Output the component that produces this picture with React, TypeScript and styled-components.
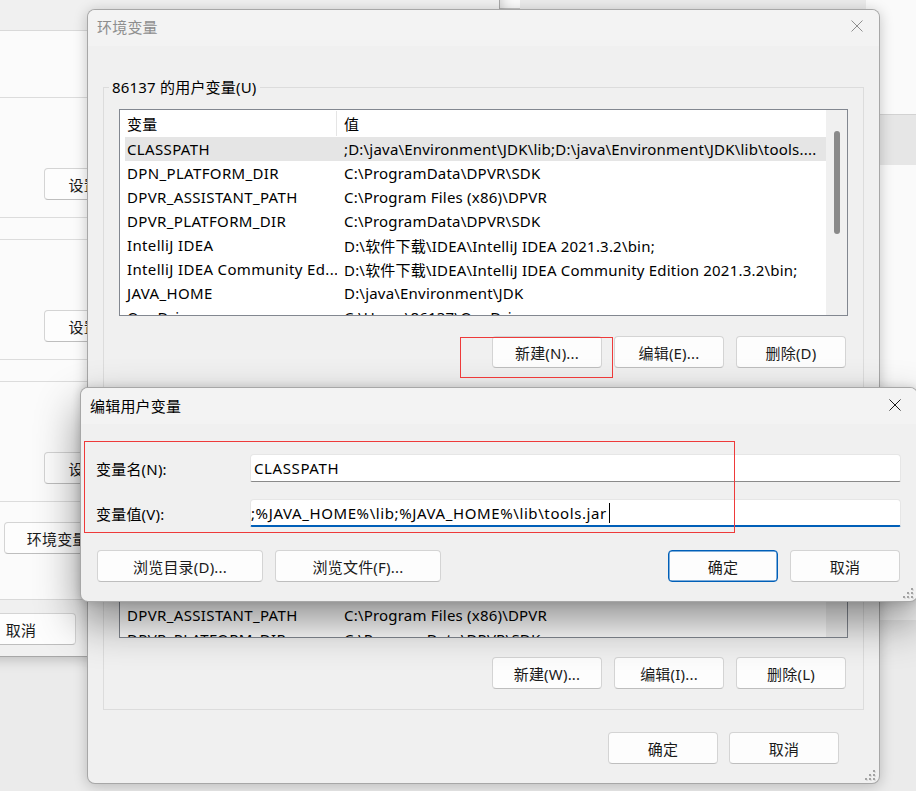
import React from 'react';
import styled, { createGlobalStyle, css } from 'styled-components';

const GlobalStyles = createGlobalStyle`
  html, body {
    margin: 0;
    padding: 0;
  }
  body {
    font-family: "Noto Sans", "Noto Sans CJK SC", sans-serif;
    font-size: 15px;
    letter-spacing: 0.2px;
    color: #000;
  }
  * {
    box-sizing: border-box;
  }
`

const Desktop = styled.div`
  position: relative;
  width: 916px;
  height: 791px;
  overflow: hidden;
  background: #ebebeb;
`

type Frame = { $left: number; $top: number; $width: number; $height: number };

const Window = styled.div<Frame & { $active?: boolean }>`
  position: absolute;
  left: ${({$left}) => $left}px;
  top: ${({$top}) => $top}px;
  width: ${({$width}) => $width}px;
  height: ${({$height}) => $height}px;
  display: flex;
  flex-direction: column;
  background: #f0f0f0;
  border: 1px solid rgba(0, 0, 0, 0.3);
  border-radius: 8px;
  overflow: hidden;
  box-shadow: ${({$active}) => $active
    ? '0 20px 44px rgba(0, 0, 0, 0.44), 0 0 10px rgba(0, 0, 0, 0.14)'
    : '0 2px 14px rgba(0, 0, 0, 0.22)'};
`

const TitleBar = styled.div<{ $inactive?: boolean }>`
  height: 36px;
  flex-shrink: 0;
  display: flex;
  align-items: center;
  padding-left: 9px;
  padding-bottom: ${({$inactive}) => $inactive ? 4 : 2}px;
  background: #f3f3f3;
  color: ${({$inactive}) => $inactive ? '#8e8e8e' : '#000'};
  font-size: 15px;
`

const CloseBox = styled.div`
  margin-left: auto;
  width: 44px;
  height: 36px;
  display: flex;
  align-items: center;
  justify-content: center;
`

const CloseIcon = ({color}: { color: string }) => (
  <svg width="12" height="12" viewBox="0 0 12 12">
    <path d="M0.5 0.5 L11.5 11.5 M11.5 0.5 L0.5 11.5" stroke={color} strokeWidth="1" fill="none"/>
  </svg>
)

const GripBox = styled.svg`
  position: absolute;
  right: 2px;
  bottom: 1px;
`

const Grip = () => (
  <GripBox width="12" height="12" viewBox="0 0 12 12">
    {[[8, 0], [4, 4], [8, 4], [0, 8], [4, 8], [8, 8]].map(([x, y]) => (
      <g key={`${x}-${y}`}>
        <rect x={x + 1} y={y + 1} width="2" height="2" fill="#dcdcdc"/>
        <rect x={x} y={y} width="2" height="2" fill="#a3a3a3"/>
      </g>
    ))}
  </GripBox>
)

/* ---------- buttons ---------- */

const Button = styled.button<{ $width: number; $default?: boolean }>`
  width: ${({$width}) => $width}px;
  height: 32px;
  flex-shrink: 0;
  padding: 0;
  font-family: inherit;
  font-size: 15px;
  letter-spacing: inherit;
  color: #1b1b1b;
  background: #fdfdfd;
  border: 1px solid #d4d4d4;
  border-bottom-color: #bebebe;
  border-radius: 4px;
  ${({$default}) => $default && css`
    border: 1px solid #005fb8;
    box-shadow: inset 0 0 0 0.5px #005fb8;
  `}
`

const ButtonRow = styled.div<{ $gap: number; $top: number; $right: number }>`
  display: flex;
  justify-content: flex-end;
  gap: ${({$gap}) => $gap}px;
  margin-top: ${({$top}) => $top}px;
  padding-right: ${({$right}) => $right}px;
`

/* ---------- background windows ---------- */

const PropsBody = styled.div`
  display: flex;
  flex-direction: column;
  padding: 69px 0 0 8px;
`

const TabPage = styled.div`
  height: 570px;
  display: flex;
  flex-direction: column;
  gap: 21px;
  padding: 66px 0 0 8px;
  background: #fbfbfb;
  border: 1px solid #d9d9d9;
`

const PropsGroup = styled.div`
  display: flex;
  padding: 70px 0 17px 225px;
  border: 1px solid #dcdcdc;
`

const EnvButtonRow = styled.div`
  display: flex;
  margin-top: -1px;
  padding-left: 186px;
`

const PropsFooter = styled.div`
  display: flex;
  gap: 12px;
  margin-top: 13px;
  padding-left: 35px;
`

const StripWindow = styled.div`
  position: absolute;
  left: 180px;
  top: -40px;
  width: 340px;
  height: 49px;
  display: flex;
  align-items: stretch;
  background: #f0f0f0;
  border-bottom: 1px solid #c6c6c6;
`

const StripPane = styled.div<{ $width: number; $bg: string; $line?: boolean }>`
  width: ${({$width}) => $width}px;
  flex-shrink: 0;
  display: flex;
  align-items: flex-end;
  background: ${({$bg}) => $bg};
  border-left: ${({$line}) => $line ? '1px solid #b8b8b8' : 'none'};
`

const StripButton = styled.div`
  width: 97px;
  height: 40px;
  margin: 0 0 -1px 18px;
  background: #fdfdfd;
  border: 1px solid #d4d4d4;
  border-radius: 4px;
`

const StripBar = styled.div`
  width: 7px;
  height: 100%;
  margin-left: 16px;
  background: #7a7a7a;
`

const SideWindow = styled.div`
  position: absolute;
  left: 866px;
  top: -20px;
  width: 80px;
  height: 640px;
  display: flex;
  flex-direction: column;
  background: #fafafa;
`

const SideBand = styled.div`
  height: 51px;
  margin-top: 134px;
  background: #e6e6e6;
  border-top: 1px solid #d2d2d2;
`

/* ---------- env dialog ---------- */

const EnvBody = styled.div`
  display: flex;
  flex-direction: column;
  padding: 31px 15px 0;
`

const Group = styled.fieldset<{ $bottom: number; $top?: number }>`
  margin: ${({$top}) => $top ?? 0}px 0 0;
  padding: 12px 15px ${({$bottom}) => $bottom}px;
  min-width: 0;
  border: 1px solid #dcdcdc;
`

const GroupLegend = styled.legend`
  margin-left: -10px;
  padding: 0 3px;
  line-height: 20px;
  font-size: 15px;
`

const ListView = styled.div`
  height: 207px;
  display: flex;
  background: #fff;
  border: 1px solid #828790;
  overflow: hidden;
`

const ListBody = styled.div`
  flex: 1;
  min-width: 0;
  padding-left: 5px;
  overflow: hidden;
`

const HeaderRow = styled.div`
  display: flex;
  height: 27px;
  align-items: stretch;
`

const HeaderCell = styled.div<{ $width?: number }>`
  display: flex;
  align-items: center;
  ${({$width}) => $width
    ? css`width: ${$width}px; padding-left: 2px; border-right: 1px solid #e5e5e5;`
    : css`flex: 1; padding-left: 7px;`}
  margin: 1px 0;
`

const Row = styled.div<{ $selected?: boolean }>`
  display: flex;
  align-items: center;
  height: 24px;
  background: ${({$selected}) => $selected ? '#e5e5e5' : 'transparent'};
`

const NameCell = styled.div`
  width: 212px;
  flex-shrink: 0;
  padding-left: 2px;
  letter-spacing: 0.35px;
  white-space: nowrap;
  overflow: hidden;
`

const ValueCell = styled.div`
  flex: 1;
  min-width: 0;
  padding-left: 7px;
  white-space: nowrap;
  overflow: hidden;
`

const ScrollTrack = styled.div`
  width: 21px;
  flex-shrink: 0;
  display: flex;
  justify-content: center;
  background: #f0f0f0;
`

const ScrollThumb = styled.div<{ $top: number; $height: number }>`
  width: 6px;
  height: ${({$height}) => $height}px;
  margin-top: ${({$top}) => $top}px;
  background: #8a8a8a;
  border-radius: 3px;
`

/* ---------- edit dialog ---------- */

const EditBody = styled.div`
  display: flex;
  flex-direction: column;
  gap: 17px;
  padding: 30px 16px 0 15px;
`

const FieldRow = styled.div`
  display: flex;
  align-items: center;
  height: 28px;
`

const FieldLabel = styled.div`
  width: 154px;
  flex-shrink: 0;
`

const TextBox = styled.div<{ $focused?: boolean; $inset: number }>`
  flex: 1;
  height: 28px;
  display: flex;
  align-items: center;
  padding-left: ${({$inset}) => $inset}px;
  letter-spacing: 0.6px;
  background: #fff;
  border: 1px solid #e6e6e6;
  border-bottom: ${({$focused}) => $focused ? '2px solid #005fb8' : '1px solid #8a8a8a'};
  border-radius: 4px 4px 2px 2px;
  white-space: nowrap;
  overflow: hidden;
`

const Caret = styled.span`
  display: inline-block;
  width: 1px;
  height: 20px;
  margin-left: 2px;
  background: #000;
`

const EditFooter = styled.div`
  display: flex;
  justify-content: space-between;
  margin-top: 6px;
  padding: 0 1px;
`

const ButtonGroup = styled.div`
  display: flex;
  gap: 12px;
`

const Annotation = styled.div<Frame>`
  position: absolute;
  left: ${({$left}) => $left}px;
  top: ${({$top}) => $top}px;
  width: ${({$width}) => $width}px;
  height: ${({$height}) => $height}px;
  border: 1px solid #ee3a3a;
  pointer-events: none;
`

const userVars: [string, string][] = [
  ['CLASSPATH', ';D:\\java\\Environment\\JDK\\lib;D:\\java\\Environment\\JDK\\lib\\tools....'],
  ['DPN_PLATFORM_DIR', 'C:\\ProgramData\\DPVR\\SDK'],
  ['DPVR_ASSISTANT_PATH', 'C:\\Program Files (x86)\\DPVR'],
  ['DPVR_PLATFORM_DIR', 'C:\\ProgramData\\DPVR\\SDK'],
  ['IntelliJ IDEA', 'D:\\软件下载\\IDEA\\IntelliJ IDEA 2021.3.2\\bin;'],
  ['IntelliJ IDEA Community Ed...', 'D:\\软件下载\\IDEA\\IntelliJ IDEA Community Edition 2021.3.2\\bin;'],
  ['JAVA_HOME', 'D:\\java\\Environment\\JDK'],
  ['OneDrive', 'C:\\Users\\86137\\OneDrive'],
];

const systemVars: [string, string][] = [
  ['CLASSPATH', '.;%JAVA_HOME%\\lib;%JAVA_HOME%\\lib\\tools.jar'],
  ['ComSpec', 'C:\\WINDOWS\\system32\\cmd.exe'],
  ['configsetroot', 'C:\\WINDOWS\\ConfigSetRoot'],
  ['DPN_ASSISTANT_PATH', 'C:\\Program Files (x86)\\DPVR'],
  ['DPN_PLATFORM_DIR', 'C:\\ProgramData\\DPVR\\SDK'],
  ['DPVR_ASSISTANT_DIR', 'C:\\Program Files (x86)\\DPVR'],
  ['DPVR_ASSISTANT_PATH', 'C:\\Program Files (x86)\\DPVR'],
  ['DPVR_PLATFORM_DIR', 'C:\\ProgramData\\DPVR\\SDK'],
];

function VarList({rows, selected, thumb}: { rows: [string, string][]; selected?: number; thumb: [number, number] }) {
  return (
    <ListView>
      <ListBody>
        <HeaderRow>
          <HeaderCell $width={212}>变量</HeaderCell>
          <HeaderCell>值</HeaderCell>
        </HeaderRow>
        {rows.map(([name, value], i) => (
          <Row key={name + i} $selected={i === selected}>
            <NameCell>{name}</NameCell>
            <ValueCell>{value}</ValueCell>
          </Row>
        ))}
      </ListBody>
      <ScrollTrack>
        <ScrollThumb $top={thumb[0]} $height={thumb[1]}/>
      </ScrollTrack>
    </ListView>
  );
}

function App() {
  return (
    <Desktop>
      <GlobalStyles/>

      <StripWindow>
        <StripPane $width={27} $bg="#f0f0f0"/>
        <StripPane $width={123} $bg="#fafafa" $line/>
        <StripPane $width={157} $bg="#f2f2f2" $line>
          <StripButton/>
          <StripBar/>
        </StripPane>
        <StripPane $width={33} $bg="#fbfbfb" $line/>
      </StripWindow>

      <SideWindow>
        <SideBand/>
      </SideWindow>

      <Window $left={-200} $top={-40} $width={700} $height={697}>
        <PropsBody>
          <TabPage>
            <PropsGroup><Button $width={110}>设置(S)...</Button></PropsGroup>
            <PropsGroup><Button $width={110}>设置(E)...</Button></PropsGroup>
            <PropsGroup><Button $width={110}>设置(T)...</Button></PropsGroup>
            <EnvButtonRow><Button $width={140}>环境变量(N)...</Button></EnvButtonRow>
          </TabPage>
          <PropsFooter>
            <Button $width={110}>确定</Button>
            <Button $width={110}>取消</Button>
            <Button $width={110}>应用(A)</Button>
          </PropsFooter>
        </PropsBody>
      </Window>

      <Window $left={87} $top={9} $width={793} $height={775}>
        <TitleBar $inactive>
          环境变量
          <CloseBox><CloseIcon color="#8e8e8e"/></CloseBox>
        </TitleBar>
        <EnvBody>
          <Group $bottom={23}>
            <GroupLegend>86137 的用户变量(U)</GroupLegend>
            <VarList rows={userVars} selected={0} thumb={[21, 103]}/>
            <ButtonRow $gap={12} $top={20} $right={2}>
              <Button $width={110}>新建(N)...</Button>
              <Button $width={110}>编辑(E)...</Button>
              <Button $width={110}>删除(D)</Button>
            </ButtonRow>
          </Group>
          <Group $bottom={20} $top={7}>
            <GroupLegend>系统变量(S)</GroupLegend>
            <VarList rows={systemVars} thumb={[21, 70]}/>
            <ButtonRow $gap={12} $top={19} $right={2}>
              <Button $width={110}>新建(W)...</Button>
              <Button $width={110}>编辑(I)...</Button>
              <Button $width={110}>删除(L)</Button>
            </ButtonRow>
          </Group>
          <ButtonRow $gap={11} $top={22} $right={25}>
            <Button $width={110}>确定</Button>
            <Button $width={110}>取消</Button>
          </ButtonRow>
        </EnvBody>
        <Grip/>
      </Window>

      <Window $left={80} $top={387} $width={838} $height={215} $active>
        <TitleBar>
          编辑用户变量
          <CloseBox><CloseIcon color="#1a1a1a"/></CloseBox>
        </TitleBar>
        <EditBody>
          <FieldRow>
            <FieldLabel>变量名(N):</FieldLabel>
            <TextBox $inset={3}>CLASSPATH</TextBox>
          </FieldRow>
          <FieldRow>
            <FieldLabel>变量值(V):</FieldLabel>
            <TextBox $inset={0} $focused>
              ;%JAVA_HOME%\lib;%JAVA_HOME%\lib\tools.jar<Caret/>
            </TextBox>
          </FieldRow>
          <EditFooter>
            <ButtonGroup>
              <Button $width={166}>浏览目录(D)...</Button>
              <Button $width={166}>浏览文件(F)...</Button>
            </ButtonGroup>
            <ButtonGroup>
              <Button $width={110} $default>确定</Button>
              <Button $width={110}>取消</Button>
            </ButtonGroup>
          </EditFooter>
        </EditBody>
        <Grip/>
      </Window>

      <Annotation $left={460} $top={337} $width={153} $height={41}/>
      <Annotation $left={84} $top={441} $width={651} $height={92}/>
    </Desktop>
  );
}

export default App;
